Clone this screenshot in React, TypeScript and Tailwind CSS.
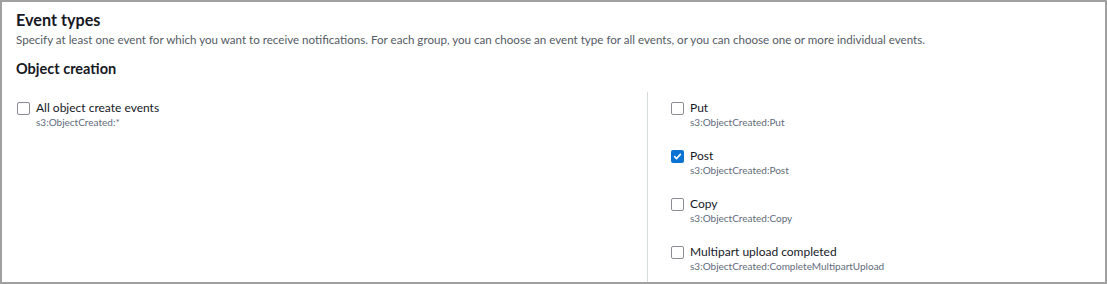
import React from "react";

function Box({ checked }: { checked?: boolean }) {
  if (checked) {
    return (
      <div className="w-[13px] h-[13px] rounded-[2px] bg-[#0972d3] flex items-center justify-center shrink-0 mt-[2px]">
        <svg width="9" height="9" viewBox="0 0 10 10">
          <path d="M1.8 5.2 L4 7.3 L8.2 2.6" fill="none" stroke="#fff" strokeWidth="1.8" strokeLinecap="round" strokeLinejoin="round" />
        </svg>
      </div>
    );
  }
  return <div className="w-[13px] h-[13px] rounded-[2px] border-[1.5px] border-[#8c8c94] bg-white shrink-0 mt-[2px]" />;
}

function Item({ label, sub, checked }: { label: string; sub: string; checked?: boolean }) {
  return (
    <div className="flex gap-[6px] items-start">
      <Box checked={checked} />
      <div className="flex flex-col">
        <div className="text-[12px] leading-[16px] text-[#16191f]">{label}</div>
        <div className="text-[10px] leading-[12px] text-[#5f6b7a]">{sub}</div>
      </div>
    </div>
  );
}

export default function App() {
  return (
    <div className="w-[1107px] h-[284px] bg-white border-2 border-[#a0a0a0] overflow-hidden" style={{ fontFamily: 'Lato, "Noto Sans", sans-serif' }}>
      <div className="pl-[14px] pt-[7px]">
        <div className="text-[16.2px] leading-[22px] font-bold text-[#16191f]">Event types</div>
        <div className="text-[11.6px] leading-[16px] text-[#545b64] mt-[1px]">
          Specify at least one event for which you want to receive notifications. For each group, you can choose an event type for all events, or you can choose one or more individual events.
        </div>
        <div className="text-[14.5px] leading-[20px] font-bold text-[#16191f] mt-[11px]">Object creation</div>
      </div>
      <div className="flex mt-[13px]">
        <div className="w-[645px] pl-[15px] pt-[8px]">
          <Item label="All object create events" sub="s3:ObjectCreated:*" />
        </div>
        <div className="border-l border-[#d5dbdb] pl-[23px] pt-[8px] flex flex-col gap-[20px] h-[200px]">
          <Item label="Put" sub="s3:ObjectCreated:Put" />
          <Item label="Post" sub="s3:ObjectCreated:Post" checked />
          <Item label="Copy" sub="s3:ObjectCreated:Copy" />
          <Item label="Multipart upload completed" sub="s3:ObjectCreated:CompleteMultipartUpload" />
        </div>
      </div>
    </div>
  );
}
